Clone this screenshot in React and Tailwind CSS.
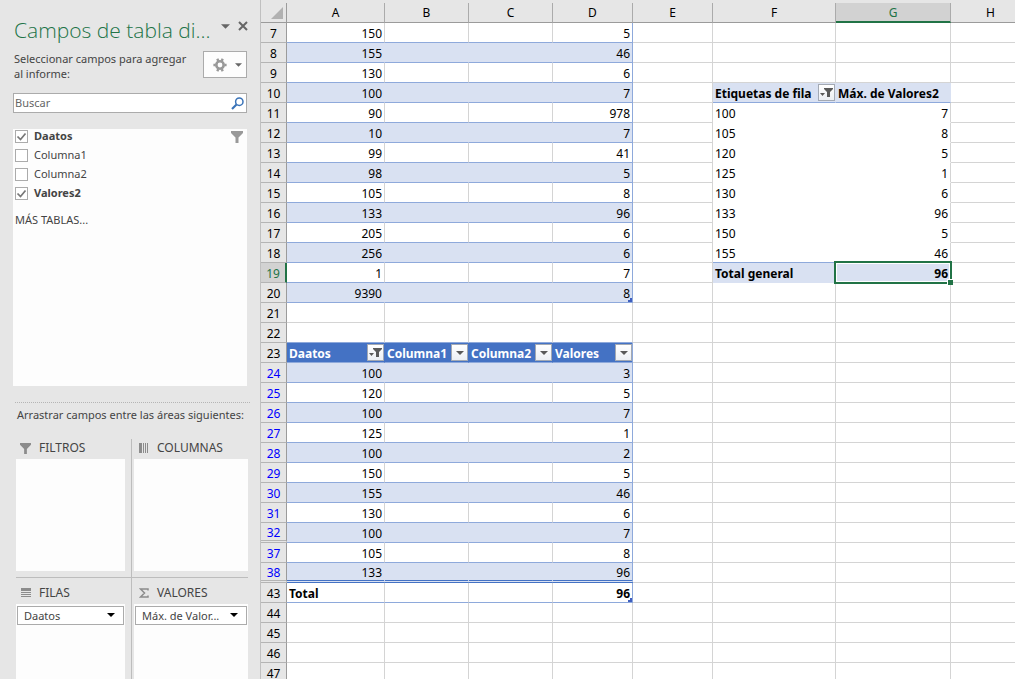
import React from "react";
import clsx from "clsx";

const COLUMNS = ["A", "B", "C", "D", "E", "F", "G", "H"];

const ROWS = [
    7, 8, 9, 10, 11, 12, 13, 14, 15, 16, 17, 18, 19, 20, 21, 22, 23, 24, 25, 26,
    27, 28, 29, 30, 31, 32, 37, 38, 43, 44, 45, 46, 47,
];

const TOP_TABLE = {
    7: [150, 5], 8: [155, 46], 9: [130, 6], 10: [100, 7], 11: [90, 978],
    12: [10, 7], 13: [99, 41], 14: [98, 5], 15: [105, 8], 16: [133, 96],
    17: [205, 6], 18: [256, 6], 19: [1, 7], 20: [9390, 8],
};

const FILTERED_TABLE = {
    24: [100, 3], 25: [120, 5], 26: [100, 7], 27: [125, 1], 28: [100, 2],
    29: [150, 5], 30: [155, 46], 31: [130, 6], 32: [100, 7], 37: [105, 8],
    38: [133, 96],
};

const PIVOT = {
    11: [100, 7], 12: [105, 8], 13: [120, 5], 14: [125, 1],
    15: [130, 6], 16: [133, 96], 17: [150, 5], 18: [155, 46],
};

const TABLE_HEADS = { A: "Daatos", B: "Columna1", C: "Columna2", D: "Valores" };

const FIELDS = [
    { name: "Daatos", checked: true },
    { name: "Columna1", checked: false },
    { name: "Columna2", checked: false },
    { name: "Valores2", checked: true },
];

const Funnel = ({ className }) => (
    <svg viewBox="0 0 12 12" className={className} fill="currentColor" aria-hidden="true">
        <path d="M0 0h12v2L7.500 6.500V12H4.500V6.500L0 2z" />
    </svg>
);

const Caret = ({ className }) => (
    <svg viewBox="0 0 8 4" className={className} fill="currentColor" aria-hidden="true">
        <path d="M0 0h8L4 4z" />
    </svg>
);

const FilterButton = ({ active, label }) => (
    <button
        type="button"
        aria-label={label}
        className="flex h-[17px] w-[17px] shrink-0 items-center justify-center border border-[#a3a9b3] bg-linear-to-b from-white to-[#eceff4] text-[#595959]"
    >
        {active ? (
            <svg viewBox="0 0 13 11" className="h-[11px] w-[13px]" fill="currentColor" aria-hidden="true">
                <path d="M4 1h9v1L10 5v5H7V5L4 2z" />
                <path d="M0 6h5L2.500 9z" />
            </svg>
        ) : (
            <Caret className="h-1 w-2" />
        )}
    </button>
);

// Blue mark in the last cell of a table
const Corner = () => (
    <svg viewBox="0 0 4 4" className="absolute right-0 bottom-0 h-1 w-1" fill="#3f5fbf" aria-hidden="true">
        <path d="M2 0h2v4H0V2h2z" />
    </svg>
);

const FilterHead = ({ title, active }) => (
    <div className="flex items-center justify-between">
        <span className="pt-[2px]">{title}</span>
        <FilterButton active={active} label={`Filtrar ${title}`} />
    </div>
);

const tableCell = (row, col) => {
    const data = TOP_TABLE[row] || FILTERED_TABLE[row];
    const last = col === "D";
    if (row === 23) {
        return {
            content: <FilterHead title={TABLE_HEADS[col]} active={col === "A"} />,
            className: clsx(
                "border-b-[#8ea9db] bg-[#4472c4] pl-[2px] font-bold text-white",
                last ? "border-r-[#8ea9db]" : "border-r-[#4472c4]"
            ),
        };
    }
    if (row === 22) {
        return { className: "border-r-[#d4d4d4] border-b-[#8ea9db]" };
    }
    if (row === 43) {
        return {
            content: col === "A" ? "Total" : last ? <>96<Corner /></> : null,
            className: clsx(
                "relative border-b-[#8ea9db] px-[2px] pt-[2px] font-bold",
                last ? "border-r-[#8ea9db] text-right" : "border-r-[#d4d4d4]"
            ),
        };
    }
    if (data) {
        const banded = row % 2 === 0;
        return {
            content: col === "A" ? data[0] : last ? <>{data[1]}{row === 20 && <Corner />}</> : null,
            className: clsx(
                "relative px-[2px] pt-[2px] text-right",
                banded && "bg-[#d9e1f2]",
                row === 38 ? "border-b-3 [border-bottom-style:double] border-b-[#4472c4]" : "border-b-[#8ea9db]",
                last ? "border-r-[#8ea9db]" : banded ? "border-r-[#d9e1f2]" : "border-r-[#d4d4d4]"
            ),
        };
    }
    return { className: "border-[#d4d4d4]" };
};

const pivotCell = (row, col) => {
    const first = col === "F";
    if (row === 10) {
        return {
            content: first ? <FilterHead title="Etiquetas de fila" active /> : "Máx. de Valores2",
            className: clsx(
                "border-r-[#d9e1f2] border-b-[#8ea9db] bg-[#d9e1f2] pl-[2px] font-bold",
                !first && "pt-[2px]"
            ),
        };
    }
    if (PIVOT[row]) {
        return {
            content: PIVOT[row][first ? 0 : 1],
            className: clsx(
                "px-[2px] pt-[2px]",
                first ? "border-r-white" : "border-r-[#d4d4d4] text-right",
                row === 18 ? "border-b-[#8ea9db]" : "border-b-white"
            ),
        };
    }
    if (row === 19) {
        return {
            content: first ? "Total general" : (
                <>
                    96
                    <span className="absolute -top-[2px] -right-[2px] -bottom-[2px] -left-[2px] border-2 border-[#217346] ring-1 ring-white ring-inset" />
                    <span className="absolute -right-[3px] -bottom-[3px] h-[6px] w-[6px] border-t border-l border-white bg-[#217346]" />
                </>
            ),
            className: clsx(
                "relative border-[#d9e1f2] bg-[#d9e1f2] px-[2px] pt-[2px] font-bold",
                !first && "text-right"
            ),
        };
    }
    return { className: "border-[#d4d4d4]" };
};

const getCell = (row, col) => {
    if ("ABCD".includes(col)) return tableCell(row, col);
    if ("FG".includes(col)) return pivotCell(row, col);
    return { className: "border-[#d4d4d4]" };
};

const Sheet = () => (
    <main className="min-w-0 flex-1 overflow-hidden border-l border-[#c0c0c0] bg-[#e6e6e6] pt-[3px]">
        <table className="w-full min-w-[770px] table-fixed border-separate border-spacing-0 bg-white text-xs leading-[15px] text-black">
            <colgroup>
                <col className="w-[26px]" />
                <col className="w-[98px]" />
                <col className="w-[84px]" />
                <col className="w-[84px]" />
                <col className="w-[80px]" />
                <col className="w-[80px]" />
                <col className="w-[123px]" />
                <col className="w-[115px]" />
                <col />
            </colgroup>
            <thead>
                <tr className="h-5">
                    <td className="border-r border-b border-[#9b9b9b] bg-[#e6e6e6] p-0">
                        <svg viewBox="0 0 12 12" className="ml-auto mr-[3px] h-3 w-3" fill="#b1b1b1" aria-hidden="true">
                            <path d="M12 0v12H0z" />
                        </svg>
                    </td>
                    {COLUMNS.map((col) => (
                        <th
                            key={col}
                            scope="col"
                            className={clsx(
                                "border-r border-r-[#ababab] p-0 font-normal",
                                col === "G"
                                    ? "border-b-2 border-b-[#217346] bg-[#d2d2d2] text-[#217346]"
                                    : "border-b border-b-[#9b9b9b] bg-[#e6e6e6]"
                            )}
                        >
                            {col}
                        </th>
                    ))}
                </tr>
            </thead>
            <tbody>
                {ROWS.map((row) => (
                    <tr key={row} className="h-5">
                        <th
                            scope="row"
                            className={clsx(
                                "border-b-[#b4b4b4] p-0 font-normal",
                                row === 19
                                    ? "border-r-2 border-r-[#217346] bg-[#d2d2d2] text-[#217346]"
                                    : "border-r border-r-[#9b9b9b] bg-[#e6e6e6]",
                                FILTERED_TABLE[row] && "text-[#0000ff]",
                                row === 32 || row === 38
                                    ? "border-b-3 pt-[2px] [border-bottom-style:double]"
                                    : "border-b pt-[2px]"
                            )}
                        >
                            {row}
                        </th>
                        {COLUMNS.map((col) => {
                            const { content, className } = getCell(row, col);
                            return (
                                <td key={col} className={clsx("border-r border-b p-0 whitespace-nowrap", className)}>
                                    {content}
                                </td>
                            );
                        })}
                    </tr>
                ))}
            </tbody>
        </table>
    </main>
);

const AreaHead = ({ icon, children }) => (
    <h2 className="flex h-5 items-center gap-2 pb-[2px] pl-1 text-xs">
        <span className="flex w-[11px] justify-center text-[#8c8c8c]">{icon}</span>
        {children}
    </h2>
);

const AreaSelect = ({ label, value }) => (
    <div className="relative m-px mt-[2px]">
        <select
            aria-label={label}
            className="block h-[19px] w-full appearance-none border border-[#ababab] bg-white pl-[6px] text-[11px] leading-4 text-[#444444]"
        >
            <option>{value}</option>
        </select>
        <Caret className="pointer-events-none absolute top-[7px] right-[9px] h-1 w-2 text-black" />
    </div>
);

const FieldPane = () => (
    <aside className="flex w-[260px] shrink-0 flex-col bg-[#e6e6e6] pt-4 text-[11px] text-[#444444]">
        <header className="flex items-start pr-3 pl-[14px]">
            <h1 className="flex-1 font-['Open_Sans','Noto_Sans',sans-serif] text-[21px] leading-7 font-light whitespace-nowrap text-[#217346]">
                Campos de tabla di...
            </h1>
            <button type="button" aria-label="Opciones del panel" className="mt-2 mr-2 text-[#666666]">
                <Caret className="h-[5px] w-[9px]" />
            </button>
            <button type="button" aria-label="Cerrar" className="mt-[5px] text-[#666666]">
                <svg viewBox="0 0 10 10" className="h-[10px] w-[10px]" stroke="currentColor" strokeWidth="2" aria-hidden="true">
                    <path d="M1 1l8 8M9 1l-8 8" />
                </svg>
            </button>
        </header>

        <div className="mt-[7px] flex items-start justify-between pr-[13px] pl-[14px]">
            <p className="leading-[15px] whitespace-nowrap">
                Seleccionar campos para agregar
                <br />
                al informe:
            </p>
            <button
                type="button"
                aria-label="Herramientas"
                className="flex h-[27px] w-[44px] shrink-0 items-center justify-between border border-[#ababab] bg-[#fdfdfd] pr-1 pl-[9px]"
            >
                <svg viewBox="0 0 14 14" className="h-[14px] w-[14px] text-[#999999]" aria-hidden="true">
                    <circle cx="7" cy="7" r="3.700" fill="none" stroke="currentColor" strokeWidth="2.600" />
                    <path
                        d="M4.300 .8l1 2.200M9.700 .8l-1 2.200M4.300 13.200l1-2.200M9.700 13.200l-1-2.200M.4 7h2M11.600 7h2"
                        stroke="currentColor"
                        strokeWidth="2.400"
                    />
                </svg>
                <Caret className="h-1 w-[7px] text-[#666666]" />
            </button>
        </div>

        <label className="mt-3 mr-[13px] ml-[13px] flex h-5 items-center border border-[#ababab] bg-white pr-[2px] pl-px">
            <input
                type="search"
                aria-label="Buscar"
                placeholder="Buscar"
                className="min-w-0 flex-1 pb-px leading-4 placeholder:text-[#666666] focus:outline-none"
            />
            <svg viewBox="0 0 13 13" className="h-[13px] w-[13px]" fill="none" stroke="#3a73b8" aria-hidden="true">
                <circle cx="8.300" cy="4.700" r="3.700" strokeWidth="1.500" />
                <path d="M5.500 7.500L1 12" strokeWidth="2.200" />
            </svg>
        </label>

        <section className="mt-4 mr-[13px] ml-[13px] flex h-[257px] justify-between bg-[#fdfdfd] pr-1 pl-[2px]">
            <div>
                <ul>
                    {FIELDS.map((field) => (
                        <li key={field.name}>
                            <label className={clsx("flex h-[19px] items-center gap-[6px] pb-1", field.checked && "font-bold")}>
                                <span className="relative block h-[13px] w-[13px]">
                                    <input
                                        type="checkbox"
                                        defaultChecked={field.checked}
                                        className="peer block h-[13px] w-[13px] appearance-none border border-[#ababab] bg-white"
                                    />
                                    <svg
                                        viewBox="0 0 13 13"
                                        className="pointer-events-none absolute inset-0 hidden peer-checked:block"
                                        fill="none"
                                        stroke="#777777"
                                        strokeWidth="1.700"
                                        aria-hidden="true"
                                    >
                                        <path d="M2.500 6.500L5.500 9.500L10.500 3.500" />
                                    </svg>
                                </span>
                                {field.name}
                            </label>
                        </li>
                    ))}
                </ul>
                <a href="#mas-tablas" className="mt-[7px] block leading-4">MÁS TABLAS...</a>
            </div>
            <button type="button" aria-label="Filtrar campos" className="mt-[2px] self-start text-[#999999]">
                <Funnel className="h-3 w-3" />
            </button>
        </section>

        <div className="mt-4 mr-[10px] ml-[15px] border-t border-dotted border-[#b5b5b5]" />
        <p className="mt-1 ml-[17px] leading-4 whitespace-nowrap">Arrastrar campos entre las áreas siguientes:</p>

        <div className="mt-4 mr-3 ml-4 grid flex-1 grid-cols-[115px_1fr] grid-rows-[139px_1fr]">
            <section className="flex flex-col border-b border-[#bdbdbd] pr-[6px] pb-[6px]">
                <AreaHead icon={<Funnel className="h-[11px] w-[11px]" />}>FILTROS</AreaHead>
                <div className="flex-1 bg-[#fdfdfd]" />
            </section>
            <section className="flex flex-col border-b border-l border-[#bdbdbd] pb-[6px] pl-[2px]">
                <AreaHead
                    icon={
                        <svg viewBox="0 0 10 10" className="h-[10px] w-[10px]" fill="currentColor" aria-hidden="true">
                            <path d="M0 0h3v10H0zM4 0h1v10H4zM6 0h1v10H6zM8 0h1v10H8z" />
                        </svg>
                    }
                >
                    COLUMNAS
                </AreaHead>
                <div className="flex-1 bg-[#fdfdfd]" />
            </section>
            <section className="flex flex-col pt-[6px] pr-[6px]">
                <AreaHead
                    icon={
                        <svg viewBox="0 0 10 10" className="h-[10px] w-[10px]" fill="currentColor" aria-hidden="true">
                            <path d="M0 0h10v3H0zM0 4h10v1H0zM0 6h10v1H0zM0 8h10v1H0z" />
                        </svg>
                    }
                >
                    FILAS
                </AreaHead>
                <div className="flex-1 bg-[#fdfdfd]">
                    <AreaSelect label="Filas" value="Daatos" />
                </div>
            </section>
            <section className="flex flex-col border-l border-[#bdbdbd] pt-[6px] pl-[2px]">
                <AreaHead
                    icon={
                        <svg viewBox="0 0 10 10" className="h-[10px] w-[10px]" fill="none" stroke="currentColor" strokeWidth="1.500" aria-hidden="true">
                            <path d="M9 2.500V1H1.500L5.500 5L1.500 9H9V7.500" />
                        </svg>
                    }
                >
                    VALORES
                </AreaHead>
                <div className="flex-1 bg-[#fdfdfd]">
                    <AreaSelect label="Valores" value="Máx. de Valor..." />
                </div>
            </section>
        </div>
    </aside>
);

const App = () => {
    return (
        <div className="flex h-screen overflow-hidden bg-[#e6e6e6] font-['Noto_Sans','Open_Sans',sans-serif]">
            <FieldPane />
            <Sheet />
        </div>
    );
};

export default App;
